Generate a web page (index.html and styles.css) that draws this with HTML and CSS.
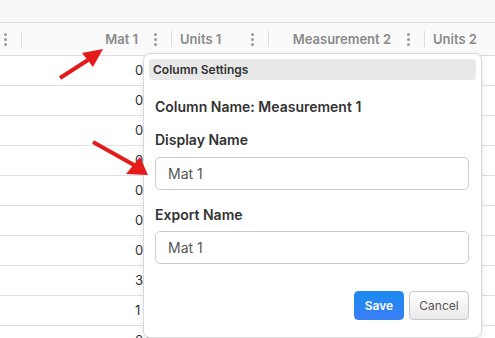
FILE: index.html
```html
<!DOCTYPE html>
<html>
<head>
<meta charset="utf-8">
<link rel="stylesheet" href="styles.css">
</head>
<body>
<div class="page">
  <div class="topbar"></div>
  <div class="grid">
    <div class="hrow">
      <div class="hcell c1"><span class="dots"><i></i><i></i><i></i></span><span class="sep"></span></div>
      <div class="hcell c2 num"><span class="label">Mat 1</span><span class="dots"><i></i><i></i><i></i></span><span class="sep"></span></div>
      <div class="hcell c3"><span class="label">Units 1</span><span class="dots"><i></i><i></i><i></i></span><span class="sep"></span></div>
      <div class="hcell c4 num"><span class="label">Measurement 2</span><span class="dots"><i></i><i></i><i></i></span><span class="sep"></span></div>
      <div class="hcell c5"><span class="label">Units 2</span></div>
    </div>
    <div class="row"><div class="cell c1"></div><div class="cell c2 val">0.00</div><div class="cell c3 txt">mm</div><div class="cell c4 val">0.00</div><div class="cell c5 txt">mm</div></div>
    <div class="row"><div class="cell c1"></div><div class="cell c2 val">0.00</div><div class="cell c3 txt">mm</div><div class="cell c4 val">0.00</div><div class="cell c5 txt">mm</div></div>
    <div class="row"><div class="cell c1"></div><div class="cell c2 val">0.00</div><div class="cell c3 txt">mm</div><div class="cell c4 val">0.00</div><div class="cell c5 txt">mm</div></div>
    <div class="row"><div class="cell c1"></div><div class="cell c2 val">0.00</div><div class="cell c3 txt">mm</div><div class="cell c4 val">0.00</div><div class="cell c5 txt">mm</div></div>
    <div class="row"><div class="cell c1"></div><div class="cell c2 val">0.00</div><div class="cell c3 txt">mm</div><div class="cell c4 val">0.00</div><div class="cell c5 txt">mm</div></div>
    <div class="row"><div class="cell c1"></div><div class="cell c2 val">0.00</div><div class="cell c3 txt">mm</div><div class="cell c4 val">0.00</div><div class="cell c5 txt">mm</div></div>
    <div class="row"><div class="cell c1"></div><div class="cell c2 val">0.00</div><div class="cell c3 txt">mm</div><div class="cell c4 val">0.00</div><div class="cell c5 txt">mm</div></div>
    <div class="row"><div class="cell c1"></div><div class="cell c2 val">3.25</div><div class="cell c3 txt">mm</div><div class="cell c4 val">1.10</div><div class="cell c5 txt">mm</div></div>
    <div class="row"><div class="cell c1"></div><div class="cell c2 val">1</div><div class="cell c3 txt">mm</div><div class="cell c4 val">0.80</div><div class="cell c5 txt">mm</div></div>
    <div class="row"><div class="cell c1"></div><div class="cell c2 val">0.00</div><div class="cell c3 txt">54</div><div class="cell c4 val">0.00</div><div class="cell c5 txt">mm</div></div>
  </div>

  <div class="popover">
    <div class="pop-head">Column Settings</div>
    <div class="pop-body">
      <div class="pop-title">Column Name: Measurement 1</div>
      <label class="pop-label">Display Name</label>
      <div class="pop-input">Mat 1</div>
      <label class="pop-label second">Export Name</label>
      <div class="pop-input second">Mat 1</div>
      <div class="pop-actions">
        <button class="btn btn-save">Save</button>
        <button class="btn btn-cancel">Cancel</button>
      </div>
    </div>
  </div>

  <svg class="arrows" width="495" height="338" viewBox="0 0 495 338">
    <line x1="60" y1="78" x2="88" y2="60" stroke="#e31b1b" stroke-width="4"/>
    <polygon points="103,49 82,53 93,67" fill="#e31b1b"/>
    <line x1="93" y1="142" x2="134" y2="165" stroke="#e31b1b" stroke-width="4"/>
    <polygon points="148,175 126,174 140,157" fill="#e31b1b"/>
  </svg>
</div>
</body>
</html>
```
FILE: styles.css
```css
* { box-sizing: border-box; }
html, body { margin: 0; padding: 0; }
body {
  font-family: "Inter", "Liberation Sans", sans-serif;
  background: #ffffff;
  color: #333;
  width: 495px;
  height: 338px;
  overflow: hidden;
}
.page { position: relative; width: 495px; height: 338px; overflow: hidden; }
.topbar { height: 23px; background: #f8f8f8; border-bottom: 1px solid #dcdcdc; }
.grid { display: flex; flex-direction: column; }
.hrow {
  display: flex;
  height: 33px;
  background: #fafafa;
  border-bottom: 1px solid #dcdcdc;
}
.hcell { display: flex; align-items: center; height: 32px; flex: none; }
.c1 { width: 22px; }
.c2 { width: 150px; }
.c3 { width: 97px; }
.c4 { width: 156px; }
.c5 { flex: 1; }
.label {
  flex: 1;
  font-size: 13px;
  font-weight: 600;
  color: #8a8a8a;
  white-space: nowrap;
}
.hcell.num .label { text-align: right; }
.c3 .label, .c5 .label { padding-left: 8px; }
.c1 .dots { margin-left: auto; }
.dots {
  display: flex;
  flex-direction: column;
  gap: 2px;
  width: 3px;
  margin-left: 16px;
  margin-right: 14px;
}
.dots i { display: block; width: 3px; height: 3px; border-radius: 50%; background: #9a9a9a; }
.sep { width: 1px; height: 16px; background: #dcdcdc; }
.row {
  display: flex;
  height: 30px;
  border-bottom: 1px solid #e0e0e0;
}
.cell {
  flex: none;
  font-size: 13px;
  line-height: 29px;
  color: #333;
  white-space: nowrap;
}
.cell.c5 { flex: 1; }
.cell.val { padding-left: 113px; }
.cell.c4.val { padding-left: 100px; }
.cell.txt { padding-left: 8px; }

.popover {
  position: absolute;
  left: 143px;
  top: 53px;
  width: 339px;
  background: #fff;
  border: 1px solid #d9d9d9;
  border-radius: 7px;
  padding: 5px;
  box-shadow: 0 2px 6px rgba(0,0,0,0.10);
}
.pop-head {
  height: 21px;
  background: #e8e8e8;
  border-radius: 4px;
  padding-left: 4px;
  font-size: 12px;
  font-weight: 600;
  line-height: 21px;
  color: #333;
}
.pop-body {
  display: flex;
  flex-direction: column;
  padding: 0 7px 12px 6px;
}
.pop-title, .pop-label {
  font-size: 14px;
  font-weight: 600;
  line-height: 16px;
  color: #333;
}
.pop-title { margin-top: 19px; }
.pop-label { margin-top: 17px; }
.pop-input {
  margin-top: 9px;
  height: 33px;
  border: 1px solid #cccccc;
  border-radius: 5px;
  padding-left: 12px;
  font-size: 14px;
  line-height: 31px;
  color: #555;
}
.pop-input.second { margin-top: 8px; }
.pop-actions {
  display: flex;
  justify-content: flex-end;
  gap: 5px;
  margin-top: 27px;
}
.btn {
  height: 29px;
  border-radius: 4px;
  font-family: "Inter", "Liberation Sans", sans-serif;
  font-size: 12px;
  padding: 0;
}
.btn-save {
  width: 50px;
  border: 1px solid #2a86ee;
  background: linear-gradient(#1a8af0, #3c7ff6);
  color: #fff;
  font-weight: 600;
}
.btn-cancel {
  width: 60px;
  border: 1px solid #c8c8c8;
  background: linear-gradient(#ffffff, #e9e9e9);
  color: #555;
}
.arrows { position: absolute; left: 0; top: 0; pointer-events: none; }
```
